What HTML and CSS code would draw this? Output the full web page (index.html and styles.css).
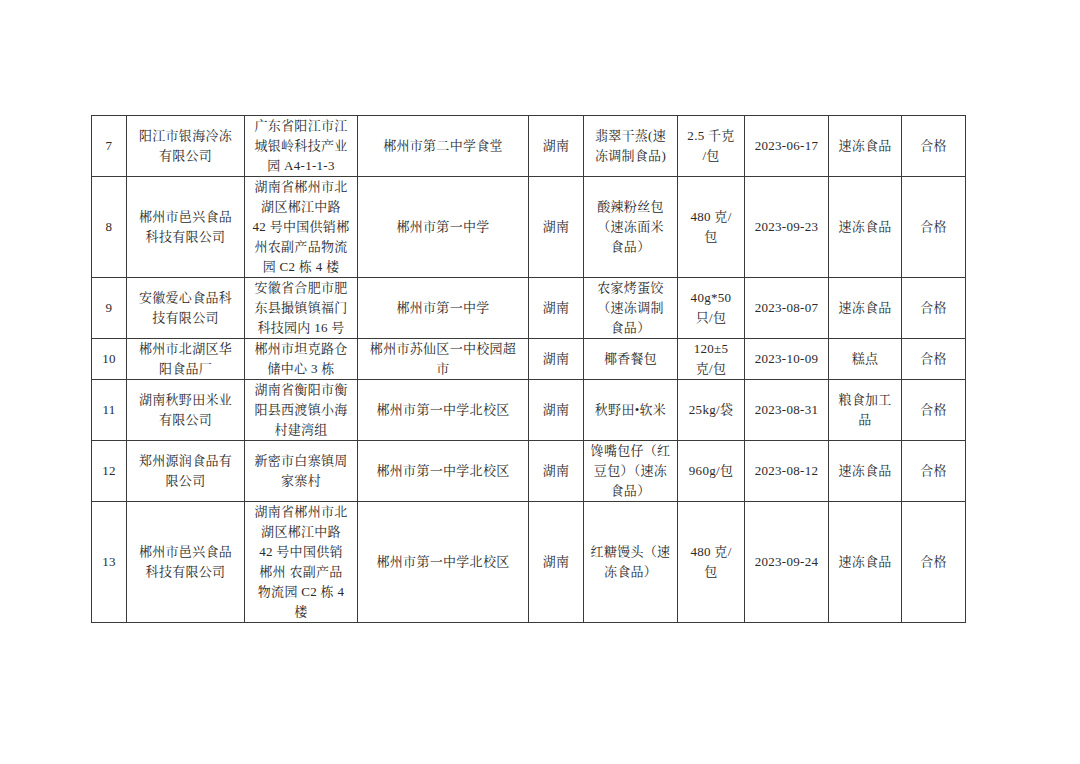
FILE: index.html
```html
<!DOCTYPE html>
<html lang="zh-CN">
<head>
<meta charset="utf-8">
<link rel="stylesheet" href="styles.css">
</head>
<body>
<div class="page">
<table class="grid">
<colgroup>
<col class="c1"><col class="c2"><col class="c3"><col class="c4"><col class="c5">
<col class="c6"><col class="c7"><col class="c8"><col class="c9"><col class="c10">
</colgroup>
<tbody>
<tr>
<td>7</td>
<td>阳江市银海冷冻<br>有限公司</td>
<td>广东省阳江市江<br>城银岭科技产业<br>园 A4-1-1-3</td>
<td>郴州市第二中学食堂</td>
<td>湖南</td>
<td>翡翠干蒸(速<br>冻调制食品)</td>
<td>2.5 千克<br>/包</td>
<td>2023-06-17</td>
<td>速冻食品</td>
<td>合格</td>
</tr>
<tr>
<td>8</td>
<td>郴州市邑兴食品<br>科技有限公司</td>
<td>湖南省郴州市北<br>湖区郴江中路<br>42 号中国供销郴<br>州农副产品物流<br>园 C2 栋 4 楼</td>
<td>郴州市第一中学</td>
<td>湖南</td>
<td>酸辣粉丝包<br>（速冻面米<br>食品）</td>
<td>480 克/<br>包</td>
<td>2023-09-23</td>
<td>速冻食品</td>
<td>合格</td>
</tr>
<tr>
<td>9</td>
<td>安徽爱心食品科<br>技有限公司</td>
<td>安徽省合肥市肥<br>东县撮镇镇福门<br>科技园内 16 号</td>
<td>郴州市第一中学</td>
<td>湖南</td>
<td>农家烤蛋饺<br>（速冻调制<br>食品）</td>
<td>40g*50<br>只/包</td>
<td>2023-08-07</td>
<td>速冻食品</td>
<td>合格</td>
</tr>
<tr>
<td>10</td>
<td>郴州市北湖区华<br>阳食品厂</td>
<td>郴州市坦克路仓<br>储中心 3 栋</td>
<td>郴州市苏仙区一中校园超<br>市</td>
<td>湖南</td>
<td>椰香餐包</td>
<td>120±5<br>克/包</td>
<td>2023-10-09</td>
<td>糕点</td>
<td>合格</td>
</tr>
<tr>
<td>11</td>
<td>湖南秋野田米业<br>有限公司</td>
<td>湖南省衡阳市衡<br>阳县西渡镇小海<br>村建湾组</td>
<td>郴州市第一中学北校区</td>
<td>湖南</td>
<td>秋野田•软米</td>
<td>25kg/袋</td>
<td>2023-08-31</td>
<td>粮食加工<br>品</td>
<td>合格</td>
</tr>
<tr>
<td>12</td>
<td>郑州源润食品有<br>限公司</td>
<td>新密市白寨镇周<br>家寨村</td>
<td>郴州市第一中学北校区</td>
<td>湖南</td>
<td>馋嘴包仔（红<br>豆包）（速冻<br>食品）</td>
<td>960g/包</td>
<td>2023-08-12</td>
<td>速冻食品</td>
<td>合格</td>
</tr>
<tr>
<td>13</td>
<td>郴州市邑兴食品<br>科技有限公司</td>
<td>湖南省郴州市北<br>湖区郴江中路<br>42 号中国供销<br>郴州 农副产品<br>物流园 C2 栋 4<br>楼</td>
<td>郴州市第一中学北校区</td>
<td>湖南</td>
<td>红糖馒头（速<br>冻食品）</td>
<td>480 克/<br>包</td>
<td>2023-09-24</td>
<td>速冻食品</td>
<td>合格</td>
</tr>
</tbody>
</table>
</div>
</body>
</html>
```
FILE: styles.css
```css
html, body {
  margin: 0;
  padding: 0;
  background: #ffffff;
}
.page {
  padding: 115px 0 0 91px;
}
.grid {
  border-collapse: collapse;
  table-layout: fixed;
  width: 875px;
  font-family: "Liberation Serif", "Noto Serif CJK SC", "Noto Sans CJK SC", serif;
  font-size: 13px;
  letter-spacing: 0.3px;
  line-height: 20px;
  color: #2a2a2a;
}
.grid td {
  border: 1px solid #3a3a3a;
  padding: 0;
  text-align: center;
  vertical-align: middle;
  white-space: nowrap;
}
.c1 { width: 35px; }
.c2 { width: 118px; }
.c3 { width: 113px; }
.c4 { width: 171px; }
.c5 { width: 55px; }
.c6 { width: 94px; }
.c7 { width: 67px; }
.c8 { width: 84px; }
.c9 { width: 73px; }
.c10 { width: 64px; }
```
